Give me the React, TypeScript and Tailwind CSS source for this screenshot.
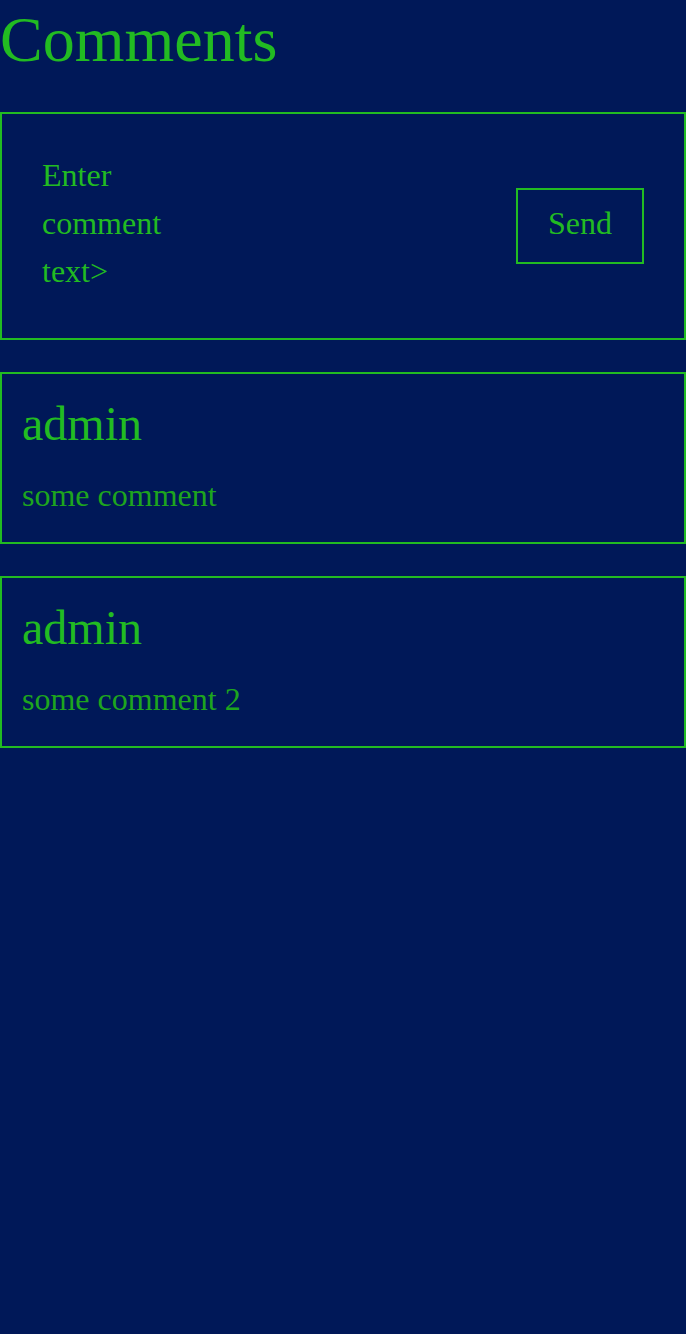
import { useState } from "react";

type Comment = {
  id: number;
  author: string;
  text: string;
};

const comments: Comment[] = [
  { id: 1, author: "admin", text: "some comment" },
  { id: 2, author: "admin", text: "some comment 2" },
];

const App = () => {
  const [value, setValue] = useState<string>("");

  return (
    <div className="min-h-[1334px] bg-[#001858] font-['Liberation_Serif',serif] text-[#22bb22]">
      {/* Title */}
      <h1 className="text-[64px] leading-[80px] m-0">Comments</h1>

      {/* New comment form */}
      <div className="mt-8 border-2 border-[#22bb22] p-10 flex items-center justify-between">
        <textarea
          value={value}
          onChange={(e) => setValue(e.target.value)}
          placeholder="Enter comment text>"
          className="w-[150px] h-[144px] -translate-y-[3px] resize-none bg-transparent outline-none text-[32px] leading-[48px] text-[#22bb22] placeholder:text-[#22bb22] font-['Liberation_Serif',serif] overflow-hidden"
        />
        <button className="border-2 border-[#22bb22] px-[30px] pt-[9px] pb-[15px] text-[32px] leading-[48px] text-[#22bb22] bg-transparent">
          Send
        </button>
      </div>

      {/* Comment list */}
      {comments.map((c) => (
        <div key={c.id} className="mt-8 border-2 border-[#22bb22] px-5 pt-5 pb-[23px]">
          <h2 className="text-[48px] leading-[60px]">{c.author}</h2>
          <p className="mt-[17px] text-[32px] leading-[48px] text-[#1ea51e]">{c.text}</p>
        </div>
      ))}
    </div>
  );
};

export default App;
